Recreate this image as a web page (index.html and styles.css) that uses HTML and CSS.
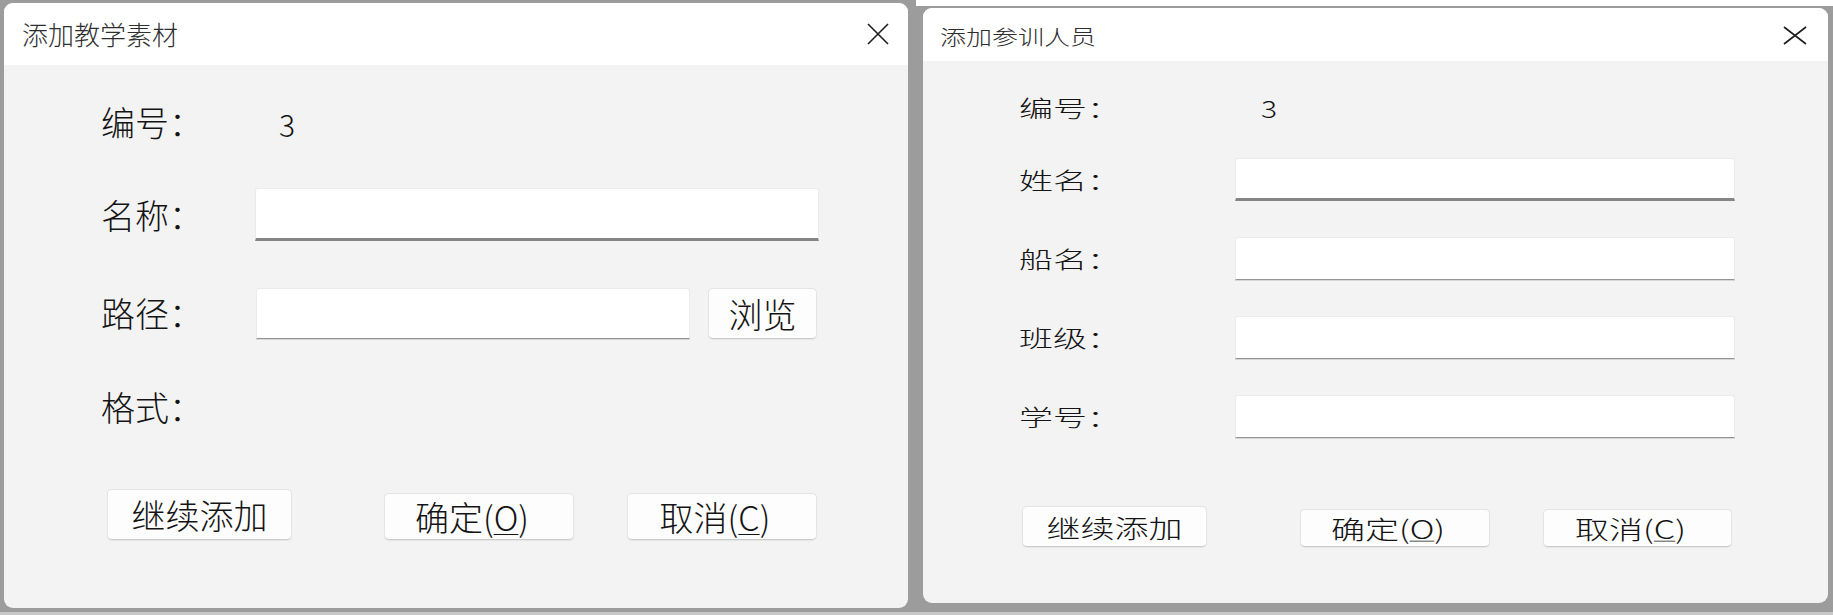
FILE: index.html
```html
<!DOCTYPE html>
<html lang="zh-CN">
<head>
<meta charset="utf-8">
<title>添加对话框</title>
<link rel="stylesheet" href="styles.css">
</head>
<body>
  <section class="dialog dialog-a">
    <header class="titlebar">
      <span class="title">添加教学素材</span>
      <svg class="close" viewBox="0 0 22 22" width="22" height="22"><path d="M1 1 L21 21 M21 1 L1 21" /></svg>
    </header>
    <div class="body">
      <div class="row row-id">
        <span class="label">编号：</span>
        <span class="value">3</span>
      </div>
      <div class="row row-name">
        <span class="label">名称：</span>
        <div class="input input-focus input-name"></div>
      </div>
      <div class="row row-path">
        <span class="label">路径：</span>
        <div class="input input-path"></div>
        <div class="btn btn-browse"><span class="btxt">浏览</span></div>
      </div>
      <div class="row row-format">
        <span class="label">格式：</span>
      </div>
      <div class="actions">
        <div class="btn btn-continue"><span class="btxt">继续添加</span></div>
        <div class="btn btn-ok"><span class="btxt">确定(<u>O</u>)</span></div>
        <div class="btn btn-cancel"><span class="btxt">取消(<u>C</u>)</span></div>
      </div>
    </div>
  </section>

  <section class="dialog dialog-b">
    <header class="titlebar">
      <span class="title"><span class="sq-title">添加参训人员</span></span>
      <svg class="close" viewBox="0 0 24 19" width="24" height="19"><path d="M1 1 L23 18 M23 1 L1 18" /></svg>
    </header>
    <div class="body">
      <div class="row row-id">
        <span class="label"><span class="sq">编号：</span></span>
        <span class="value"><span class="sq-val">3</span></span>
      </div>
      <div class="row">
        <span class="label"><span class="sq">姓名：</span></span>
        <div class="input input-focus"></div>
      </div>
      <div class="row">
        <span class="label"><span class="sq">船名：</span></span>
        <div class="input"></div>
      </div>
      <div class="row">
        <span class="label"><span class="sq">班级：</span></span>
        <div class="input"></div>
      </div>
      <div class="row">
        <span class="label"><span class="sq">学号：</span></span>
        <div class="input"></div>
      </div>
      <div class="actions">
        <div class="btn btn-continue"><span class="btxt">继续添加</span></div>
        <div class="btn btn-ok"><span class="btxt">确定(<u>O</u>)</span></div>
        <div class="btn btn-cancel"><span class="btxt">取消(<u>C</u>)</span></div>
      </div>
    </div>
  </section>
</body>
</html>
```

FILE: styles.css
```css
html, body {
  margin: 0;
  padding: 0;
}

body {
  width: 1833px;
  height: 615px;
  overflow: hidden;
  display: flex;
  align-items: flex-start;
  font-family: "Noto Sans CJK SC", "Noto Sans", sans-serif;
  color: #141414;
  background:
    linear-gradient(#ffffff, #ffffff) no-repeat 916px 0 / 917px 6px,
    linear-gradient(#c8c8c8, #c8c8c8) no-repeat 0 612px / 1833px 3px,
    #9c9c9c;
}

.dialog {
  display: flex;
  flex-direction: column;
  background: #f3f3f3;
  border-radius: 9px;
  overflow: hidden;
  box-sizing: border-box;
}

.dialog-a {
  width: 904px;
  height: 605px;
  margin: 3px 0 0 4px;
}

.dialog-b {
  width: 905px;
  height: 595px;
  margin: 8px 0 0 15px;
}

.titlebar {
  flex: none;
  display: flex;
  align-items: center;
  justify-content: space-between;
  background: #ffffff;
}

.dialog-a .titlebar {
  height: 62px;
  padding: 0 19px 0 18px;
}

.dialog-b .titlebar {
  height: 53px;
  padding: 2px 21px 0 17px;
  box-sizing: border-box;
}

.title {
  font-size: 26px;
  color: #2e2e2e;
  line-height: 1;
  font-weight: 300;
}

.sq-title {
  display: inline-block;
  transform: scaleY(0.8);
}

.close {
  display: block;
}

.close path {
  stroke: #1e1e1e;
  stroke-width: 1.6;
  fill: none;
}

.body {
  display: flex;
  flex-direction: column;
}

.dialog-a .body {
  padding: 30px 0 0 97px;
}

.dialog-b .body {
  padding: 25px 0 0 96px;
}

.row {
  display: flex;
  align-items: center;
}

.label {
  flex: none;
  font-size: 34px;
  line-height: 1;
  font-weight: 300;
}

.value {
  font-size: 30px;
  line-height: 1;
  font-weight: 300;
}

.sq {
  display: inline-block;
  transform: scaleY(0.66);
}

.sq-val {
  display: inline-block;
  transform: scaleY(0.78);
}

.input {
  background: #ffffff;
  border: 1px solid #ebebeb;
  border-bottom: 1px solid #949494;
  border-radius: 3px 3px 0 0;
  box-sizing: border-box;
  box-shadow: 0 1px 0 #d6d6d6;
}

.input-focus {
  border-bottom: 3px solid #858585;
  box-shadow: none;
}

/* ---------- left dialog ---------- */
.dialog-a .row {
  height: 53px;
}

.dialog-a .label {
  width: 154px;
}

.dialog-a .value {
  padding: 4px 0 0 24px;
}

.dialog-a .row-name {
  margin-top: 40px;
}

.dialog-a .row-path {
  margin-top: 46px;
  height: 52px;
}

.dialog-a .row-format {
  margin-top: 41px;
}

.dialog-a .input-name {
  width: 564px;
  height: 53px;
}

.dialog-a .input-path {
  width: 434px;
  height: 51px;
  margin-left: 1px;
}

.btn {
  flex: none;
  display: flex;
  align-items: center;
  justify-content: center;
  background: #fdfdfd;
  border: 1px solid #e4e4e4;
  border-bottom-color: #cccccc;
  border-radius: 5px;
  box-sizing: border-box;
  box-shadow: 0 1px 1px rgba(0, 0, 0, 0.06);
  font-size: 34px;
  line-height: 1;
  font-weight: 300;
}

.btn u {
  text-decoration-thickness: 1px;
  text-underline-offset: 3px;
}

.dialog-a .btn-browse {
  width: 109px;
  height: 51px;
  margin-left: 18px;
  align-self: flex-start;
  margin-top: 1px;
}

.actions {
  display: flex;
  align-items: flex-end;
}

.dialog-a .actions {
  margin-top: 56px;
}

.dialog-a .btn-continue {
  width: 185px;
  height: 51px;
  margin-left: 6px;
}

.dialog-a .btn-ok {
  width: 190px;
  height: 47px;
  margin-left: 92px;
  padding-right: 14px;
}

.dialog-a .btn-cancel {
  width: 190px;
  height: 47px;
  margin-left: 53px;
  padding-right: 14px;
}

/* ---------- right dialog ---------- */
.dialog-b .row {
  height: 43px;
  margin-top: 36px;
}

.dialog-b .row-id {
  height: 36px;
  margin-top: 0;
  padding-top: 7px;
  box-sizing: border-box;
}

.dialog-b .label {
  width: 216px;
}

.dialog-b .value {
  padding-left: 26px;
}

.dialog-b .input {
  width: 500px;
  height: 43px;
}

.dialog-b .btxt {
  display: inline-block;
  transform: scaleY(0.75);
}

.dialog-b .actions {
  margin-top: 68px;
}

.dialog-b .btn-continue {
  width: 185px;
  height: 41px;
  margin-left: 3px;
}

.dialog-b .btn-ok {
  width: 190px;
  height: 38px;
  margin-left: 93px;
  padding-right: 14px;
}

.dialog-b .btn-cancel {
  width: 189px;
  height: 38px;
  margin-left: 53px;
  padding-right: 14px;
}
```
